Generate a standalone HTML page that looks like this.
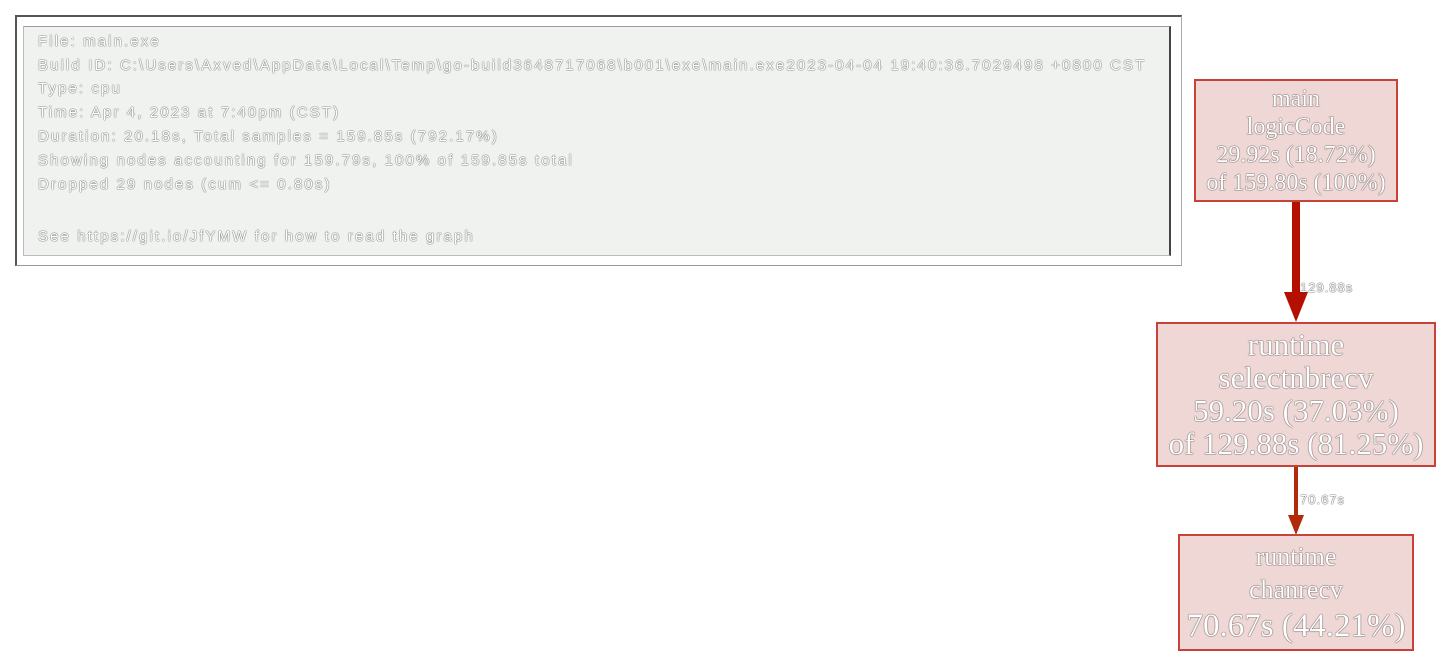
<!DOCTYPE html>
<html><head><meta charset="utf-8"><style>
body{margin:0;width:1441px;height:655px;background:#fff;position:relative;overflow:hidden;font-family:"Liberation Sans",sans-serif}
.outer{position:absolute;left:15px;top:15px;width:1167px;height:251px;border-top:2px solid #555;border-left:2px solid #555;border-right:1px solid #aaa;border-bottom:1px solid #999;box-sizing:border-box}
.inner{position:absolute;left:23px;top:26px;width:1148px;height:230px;background:#f0f2ef;border-top:1px solid #99a;border-left:1px solid #bbb;border-right:2px solid #444;border-bottom:1px solid #bbb;box-sizing:border-box}
.lg{position:absolute;left:38px;font-size:15px;letter-spacing:2.1px;color:#fff;white-space:nowrap;text-shadow:0 0 1px #444,0 0 1px #555;line-height:18px}
.node{position:absolute;background:#eed7d4;border:2px solid #c8423a;box-sizing:border-box;text-align:center;color:#fff;font-family:"Liberation Serif",serif;text-shadow:0 0 1px #333,0 0 1px #444}
.node div{white-space:nowrap}
.el{position:absolute;font-size:13px;color:#fff;text-shadow:0 0 1px #333,0 0 1px #444}
</style></head><body>
<div class="outer"></div>
<div class="inner"></div>
<div class="lg" style="top:33px">File: main.exe</div>
<div class="lg" style="top:57px">Build ID: C:\Users\Axved\AppData\Local\Temp\go-build3648717068\b001\exe\main.exe2023-04-04 19:40:36.7029498 +0800 CST</div>
<div class="lg" style="top:80px">Type: cpu</div>
<div class="lg" style="top:104px">Time: Apr 4, 2023 at 7:40pm (CST)</div>
<div class="lg" style="top:128px">Duration: 20.18s, Total samples = 159.85s (792.17%)</div>
<div class="lg" style="top:152px">Showing nodes accounting for 159.79s, 100% of 159.85s total</div>
<div class="lg" style="top:176px">Dropped 29 nodes (cum &lt;= 0.80s)</div>
<div class="lg" style="top:228px">See https://git.io/JfYMW for how to read the graph</div>

<svg style="position:absolute;left:0;top:0" width="1441" height="655">
<rect x="1292" y="200" width="8" height="95" fill="#b40f00"/>
<polygon points="1284,292 1308,292 1296,322" fill="#b40f00"/>
<rect x="1294" y="465" width="4" height="52" fill="#b22a0a"/>
<polygon points="1288,515 1304,515 1296,535" fill="#b22a0a"/>
</svg>
<div class="el" style="left:1300px;top:280px;letter-spacing:1px">129.88s</div>
<div class="el" style="left:1300px;top:492px;letter-spacing:1px">70.67s</div>

<div class="node" style="left:1194px;top:79px;width:204px;height:123px;font-size:24px;line-height:28px;padding-top:4px">
<div>main</div><div>logicCode</div><div>29.92s (18.72%)</div><div>of 159.80s (100%)</div></div>
<div class="node" style="left:1156px;top:322px;width:280px;height:145px;font-size:31px;line-height:33px;padding-top:4px">
<div>runtime</div><div>selectnbrecv</div><div>59.20s (37.03%)</div><div>of 129.88s (81.25%)</div></div>
<div class="node" style="left:1178px;top:534px;width:236px;height:117px;padding-top:5px">
<div style="font-size:26px;line-height:32px">runtime</div><div style="font-size:26px;line-height:34px">chanrecv</div><div style="font-size:33px;line-height:38px">70.67s (44.21%)</div></div>
</body></html>
